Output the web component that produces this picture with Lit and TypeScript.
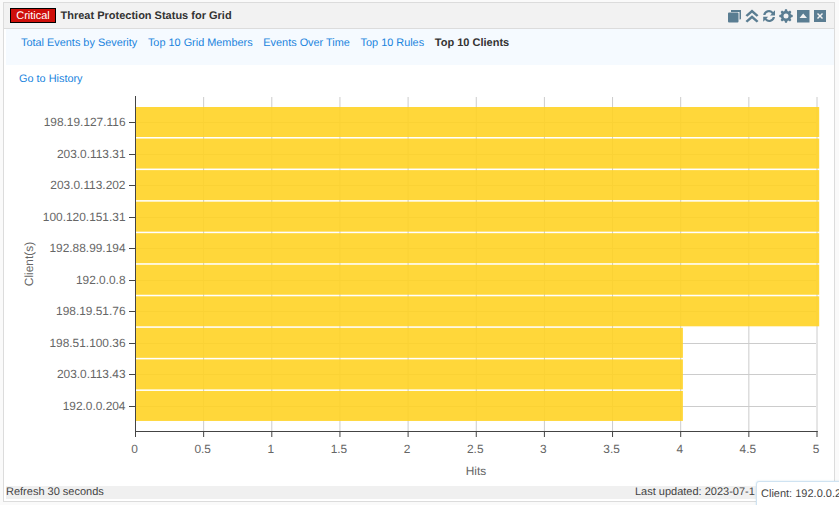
import { LitElement, html, css, svg } from "lit";
import { customElement } from "lit/decorators.js";

const clients: [string, number][] = [
  ["198.19.127.116", 5], ["203.0.113.31", 5], ["203.0.113.202", 5], ["100.120.151.31", 5],
  ["192.88.99.194", 5], ["192.0.0.8", 5], ["198.19.51.76", 5], ["198.51.100.36", 4],
  ["203.0.113.43", 4], ["192.0.0.204", 4],
];
const X0 = 135.5;
const XU = 136.3;
const ticks = [0, 0.5, 1, 1.5, 2, 2.5, 3, 3.5, 4, 4.5, 5];
const rowY = (i: number) => 122 + i * 31.55;

@customElement("app-root")
export class AppRoot extends LitElement {
  static styles = css`
    :host { display: block; position: relative; width: 839px; height: 505px; overflow: hidden; background: #fafafa;
      font-family: "Liberation Sans", Arial, sans-serif; font-size: 11px; color: #333; text-rendering: geometricPrecision; }
    .panel { box-sizing: border-box; width: 832px; height: 500px; margin: 2px 0 0 3px; border: 1px solid #dcdcdc; background: #fff; display: flex; flex-direction: column; }
    .head { height: 25px; flex: none; display: flex; align-items: center; background: #f2f2f2; border-bottom: 1px solid #dcdcdc; padding: 0 6px; }
    .badge { background: #cf0f0a; color: #fff; border: 1px solid #000; font-size: 11px; height: 13px; line-height: 14px; padding: 0 5px; width: 34px; text-align: center; }
    .title { font-weight: bold; font-size: 11px; margin-left: 4.500px; color: #333; flex: 1; }
    .icons { display: flex; gap: 3px; margin-right: 1px; }
    .icons svg { display: block; width: 14px; height: 14px; fill: #5a7d92; }
    .body { flex: 1; display: flex; flex-direction: column; padding: 0 0 0 2px; min-height: 0; }
    .tabs { height: 36px; flex: none; background: #f5faff; display: flex; gap: 10.700px; padding: 8px 0 0 15px; box-sizing: border-box; line-height: 13px; }
    a { color: #2083dd; text-decoration: none; font-size: 10.9px; }
    .tabs b { color: #333; }
    .hist { height: 30px; flex: none; padding: 8px 0 0 13px; box-sizing: border-box; line-height: 13px; }
    .chart { flex: 1; min-height: 0; position: relative; }
    .chart svg { display: block; position: absolute; left: -6px; top: -95px; width: 839px; height: 505px; font-family: "Liberation Sans", Arial, sans-serif; font-size: 11.9px; }
    .foot { height: 13px; flex: none; margin-bottom: 2px; background: #f0f0f0; display: flex; justify-content: space-between; line-height: 13px; color: #444; }
    .foot span:last-child { white-space: nowrap; margin-right: -40px; width: 239px; }
    .tip { position: absolute; left: 756px; top: 481px; width: 110px; height: 30px; box-sizing: border-box; background: #fff; border: 1px solid #cfe3f2; border-radius: 3px; padding: 6px 0 0 4px; line-height: 13px; white-space: nowrap; color: #444; box-shadow: 0 0 2px rgba(150,190,220,.4); }
  `;

  private chart() {
    return svg`
      ${ticks.slice(1).map((t) => svg`<line x1=${X0 + t * XU} x2=${X0 + t * XU} y1="97" y2="431" stroke="#ccc"/>`)}
      ${clients.map((_, i) => svg`<line x1="135" x2="816" y1=${Math.round(rowY(i)) + 0.5} y2=${Math.round(rowY(i)) + 0.5} stroke="#ccc"/>`)}
      ${clients.map(([, v], i) => svg`<rect x="135.5" y=${rowY(i) - 15} width=${v * XU + 2.2} height="30" fill="#ffd325" fill-opacity="0.9"/>`)}
      <path d="M135.5 96V431.5H817.5V431" fill="none" stroke="#444"/>
      ${ticks.map((t) => svg`
        <line x1=${X0 + t * XU} x2=${X0 + t * XU} y1="431" y2="437" stroke="#444"/>
        <text x=${X0 + t * XU - 1} y="453" text-anchor="middle" fill="#666">${String(t)}</text>`)}
      ${clients.map(([c], i) => svg`
        <line x1="129" x2="135" y1=${Math.round(rowY(i)) + 0.5} y2=${Math.round(rowY(i)) + 0.5} stroke="#444"/>
        <text x="125.500" y=${rowY(i) + 4} text-anchor="end" fill="#666">${c}</text>`)}
      <text x="476" y="475" text-anchor="middle" fill="#666">Hits</text>
      <text transform="translate(33 264) rotate(-90)" text-anchor="middle" fill="#666">Client(s)</text>
    `;
  }

  render() {
    return html`
      <div class="panel">
        <div class="head">
          <span class="badge">Critical</span>
          <span class="title">Threat Protection Status for Grid</span>
          <div class="icons">
            <svg viewBox="0 0 14 14"><path d="M3 1h10v8.500q0 1-1 1H11.500V3H3zM0 4.500Q0 3.500 1 3.500h8.500Q10.500 3.500 10.500 4.500V12.500Q10.500 13.500 9.500 13.500H1Q0 13.500 0 12.500z"/></svg>
            <svg viewBox="0 0 14 14"><path d="M7 0.500l6.500 5.800-1.800 1.500L7 3.800 2.300 7.800 0.500 6.300zM7 6.200l6.500 5.800-1.800 1.500L7 9.500 2.300 13.500 0.500 12z"/></svg>
            <svg viewBox="0 0 14 14"><path d="M1.200 6a5.800 5.800 0 0 1 10-3L13 1.200V6.500H8l1.800-1.800A3.600 3.600 0 0 0 3.400 6zM13 8a5.800 5.800 0 0 1-10 3l-1.800 1.800V7.800h5L4.400 9.500A3.600 3.600 0 0 0 10.800 8z"/></svg>
            <svg viewBox="0 0 14 14"><path fill-rule="evenodd" d="M6 1h2l.4 1.700 1.100.5L11 2.300l1.400 1.400-.9 1.500.5 1.100 1.700.4v2l-1.700.4-.5 1.100.9 1.500L11 13.100l-1.500-.9-1.100.5L8 14.400H6l-.4-1.700-1.100-.5-1.500.9L1.600 11.700l.9-1.500-.5-1.100L.3 8.700v-2L2 6.300l.5-1.100-.9-1.500L3 2.300l1.500.9 1.100-.5zM7 5.200a2.500 2.500 0 1 0 0 5 2.500 2.500 0 0 0 0-5z" transform="translate(0 -.7)"/></svg>
            <svg viewBox="0 0 14 14"><path fill-rule="evenodd" d="M1 1h12.500v12.500H1zM7.200 4.500L3.500 9h7.500z"/></svg>
            <svg viewBox="0 0 14 14"><path fill-rule="evenodd" d="M1 1h12v12H1zM5 4L4 5l2 2-2 2 1 1 2-2 2 2 1-1-2-2 2-2-1-1-2 2z"/></svg>
          </div>
        </div>
        <div class="body">
          <div class="tabs">
            <a>Total Events by Severity</a><a>Top 10 Grid Members</a><a>Events Over Time</a><a>Top 10 Rules</a><b>Top 10 Clients</b>
          </div>
          <div class="hist"><a>Go to History</a></div>
          <div class="chart"><svg viewBox="0 0 839 505">${this.chart()}</svg></div>
          <div class="foot"><span>Refresh 30 seconds</span><span>Last updated: 2023-07-1</span></div>
        </div>
      </div>
      <div class="tip">Client: 192.0.0.204</div>
    `;
  }
}
